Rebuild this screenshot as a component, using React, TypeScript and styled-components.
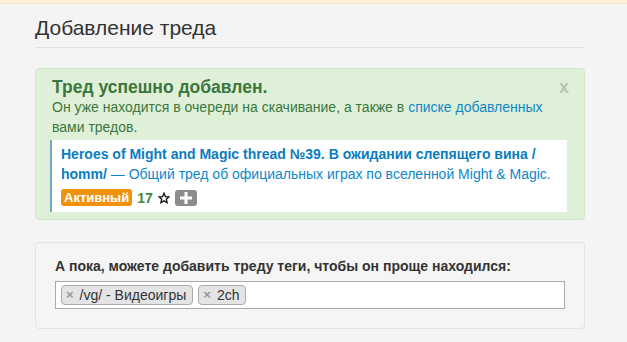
import React from "react";
import styled, { createGlobalStyle } from "styled-components";

const Global = createGlobalStyle`
  html, body { margin: 0; padding: 0; background: #f4f4f4; }
  body { font-family: "Liberation Sans", Arial, sans-serif; font-size: 14px; line-height: 20px; color: #333; }
`;

const TopStrip = styled.div`
  height: 3px;
  background: #fcf1d8;
  border-bottom: 1px solid #f2e6c6;
`;

const Main = styled.main`
  width: 550px;
  padding: 0 0 0 35px;
`;

const PageHeader = styled.h1`
  margin: 0 0 20px;
  padding: 12px 0 7px;
  font-size: 21px;
  line-height: 24px;
  font-weight: normal;
  color: #333;
  border-bottom: 1px solid #e0e0e0;
`;

const Alert = styled.div`
  position: relative;
  background: #dff0d8;
  border: 1px solid #d6e9c6;
  border-radius: 4px;
  padding: 8px 17px 7px 16px;
  color: #3c763d;
`;

const AlertTitle = styled.div`
  font-size: 17.5px;
  font-weight: bold;
  line-height: 20px;
`;

const AlertText = styled.div`
  padding-right: 20px;
`;

const Link = styled.a`
  color: #0e87c9;
  text-decoration: none;
`;

const Close = styled.span`
  position: absolute;
  top: 8px;
  right: 15px;
  font-size: 18px;
  font-weight: bold;
  color: #b4c7ad;
`;

const ThreadCard = styled.div`
  margin: 3px 0 0 -2px;
  background: #fff;
  border-left: 2px solid #73a7c4;
  padding: 4px 10px 6px 9px;
  color: #0e87c9;
`;

const ThreadTitle = styled.a`
  font-weight: bold;
  color: #0a7cc1;
  text-decoration: none;
`;

const MetaRow = styled.div`
  display: flex;
  align-items: center;
  gap: 4px;
  margin-top: 5px;
  height: 17px;
`;

const Badge = styled.span`
  background: #f0920c;
  color: #fff;
  font-weight: bold;
  font-size: 13px;
  line-height: 17px;
  padding: 0 3px;
  border-radius: 3px;
`;

const Count = styled.span`
  color: #3d8b3d;
  font-weight: bold;
  font-size: 14px;
  margin-left: 1px;
`;

const Star = styled.svg`
  display: block;
  margin: 0 1px;
`;

const PlusBtn = styled.span`
  display: inline-flex;
  align-items: center;
  justify-content: center;
  width: 22px;
  height: 16px;
  background: #8c8c8c;
  border-radius: 3px;
`;

const Well = styled.div`
  margin-top: 22px;
  background: #f5f5f5;
  border: 1px solid #e3e3e3;
  border-radius: 4px;
  padding: 13px 19px 19px 19px;
`;

const Label = styled.div`
  font-weight: bold;
  color: #333;
  margin-bottom: 5px;
`;

const TagBox = styled.div`
  display: flex;
  align-items: center;
  gap: 5px;
  height: 26px;
  background: #fff;
  border: 1px solid #aaa;
  padding: 0 5px;
`;

const Tag = styled.span`
  display: inline-flex;
  align-items: center;
  height: 18px;
  background: #e4e4e4;
  border: 1px solid #aaa;
  border-radius: 4px;
  padding: 0 6px 0 4px;
  font-size: 14px;
  color: #333;
`;

const TagX = styled.span`
  color: #999;
  font-weight: bold;
  font-size: 13px;
  margin-right: 6px;
`;

export default function App() {
  return (
    <>
      <Global />
      <TopStrip />
      <Main>
        <PageHeader>Добавление треда</PageHeader>
        <Alert>
          <Close>x</Close>
          <AlertTitle>Тред успешно добавлен.</AlertTitle>
          <AlertText>
            Он уже находится в очереди на скачивание, а также в <Link href="#">списке добавленных</Link> вами тредов.
          </AlertText>
          <ThreadCard>
            <ThreadTitle href="#">Heroes of Might and Magic thread №39. В ожидании слепящего вина / homm/</ThreadTitle>{" "}
            — Общий тред об официальных играх по вселенной Might &amp; Magic.
            <MetaRow>
              <Badge>Активный</Badge>
              <Count>17</Count>
              <Star width="12" height="12" viewBox="0 0 24 24">
                <path
                  d="M12 2.5l2.9 6.6 7.1.6-5.4 4.7 1.6 7-6.2-3.7-6.2 3.7 1.6-7L2 9.7l7.1-.6z"
                  fill="none"
                  stroke="#111"
                  strokeWidth="2.6"
                  strokeLinejoin="miter"
                />
              </Star>
              <PlusBtn>
                <svg width="12" height="12" viewBox="0 0 12 12">
                  <rect x="4.5" y="0" width="3" height="12" fill="#fff" />
                  <rect x="0" y="4.5" width="12" height="3" fill="#fff" />
                </svg>
              </PlusBtn>
            </MetaRow>
          </ThreadCard>
        </Alert>
        <Well>
          <Label>А пока, можете добавить треду теги, чтобы он проще находился:</Label>
          <TagBox>
            <Tag><TagX>×</TagX>/vg/ - Видеоигры</Tag>
            <Tag><TagX>×</TagX>2ch</Tag>
          </TagBox>
        </Well>
      </Main>
    </>
  );
}
